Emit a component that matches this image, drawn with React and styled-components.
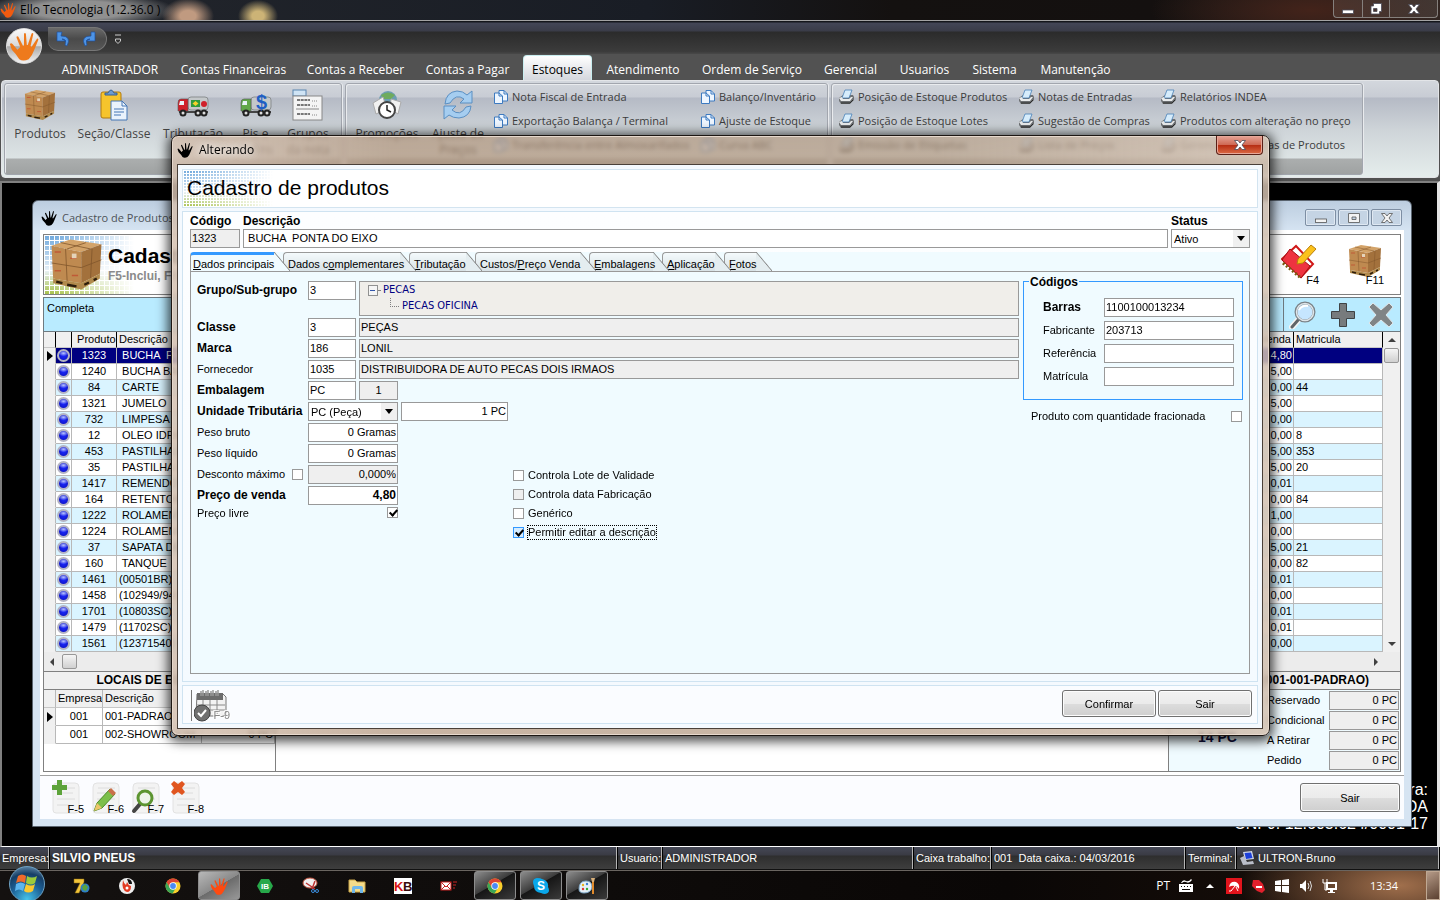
import React from 'react';
import styled, { createGlobalStyle, css } from 'styled-components';

const UI = '"Liberation Sans", Arial, sans-serif';
const SEGOE = '"Open Sans", "Noto Sans", sans-serif';

const GlobalStyle = createGlobalStyle`
  * {
    box-sizing: border-box;
  }
  body {
    margin: 0;
    background: #000;
    color: #000;
    font: 11px/16px ${UI};
  }
  button, input, select {
    font: inherit;
    color: inherit;
  }
`;

/* ---------- janela principal ---------- */

const Shell = styled.div`
  position: relative;
  display: flex;
  flex-direction: column;
  min-height: 100vh;
  overflow: hidden;
`;

const TitleBar = styled.header`
  display: flex;
  align-items: center;
  height: 21px;
  border-bottom: 1px solid #a3a3a3;
  background:
    radial-gradient(ellipse 95px 18px at 80px 10px, #909090 50%, transparent),
    radial-gradient(ellipse 26px 18px at 188px 16px, #c09a80 30%, transparent),
    radial-gradient(ellipse 20px 16px at 258px 16px, #ccb376 30%, transparent),
    radial-gradient(ellipse 160px 40px at 1310px 10px, #43231a, transparent),
    linear-gradient(90deg, #23262c, #191d25 45%, #141110 62%, #14100f 80%, #2e2623);
  font: 12px/20px ${SEGOE};

  span {
    flex: 1;
    padding-left: 4px;
  }
`;

const Caption = styled.div`
  display: flex;
  align-self: flex-start;
  height: 18px;
  margin-right: 2px;
  border: 1px solid #85807d;
  border-top: 0;
  border-radius: 0 0 4px 4px;
`;

const CaptionButton = styled.button`
  width: ${(p) => p.$w}px;
  padding: 0;
  border: 0;
  border-right: 1px solid #85807d;
  background: rgba(255, 255, 255, 0.08);
  line-height: 0;

  &:last-child {
    border-right: 0;
  }
`;

const QuickBar = styled.div`
  position: relative;
  height: 33px;
  padding-left: 48px;
  background: linear-gradient(#14161b 1px, #434656 2px, #3a3c48 10px, #2b2b2b 11px, #3c3c3c 31px, #464646 32px);
`;

const QuickPill = styled.div`
  display: flex;
  align-items: center;
  gap: 10px;
  width: 59px;
  height: 24px;
  padding-left: 8px;
  border: 1px solid #777;
  border-left: 0;
  border-radius: 0 12px 12px 10px;
  background: linear-gradient(#6a6a6a, #4a4a4a 50%, #575757);
`;

const QuickRow = styled.div`
  display: flex;
  align-items: center;
  gap: 8px;
  padding-top: 6px;
`;

const IconButton = styled.button`
  padding: 0;
  border: 0;
  background: none;
  line-height: 0;
`;

const Orb = styled.button`
  position: absolute;
  left: 6px;
  top: 7px;
  z-index: 2;
  width: 36px;
  height: 36px;
  padding: 0;
  border: 1px solid #ddd;
  border-radius: 50%;
  background: linear-gradient(#fafafa, #d9d9d9 50%, #a9a9a9 52%, #f4f4f4);
  line-height: 0;
`;

const MenuTabs = styled.nav`
  display: flex;
  align-items: flex-end;
  gap: 5px;
  height: 26px;
  padding-left: 52px;
  background: #525252;
`;

const MenuTab = styled.button`
  flex: 0 0 ${(p) => p.$w}px;
  height: 25px;
  padding: 0;
  border: 1px solid transparent;
  border-bottom: 0;
  border-radius: 4px 4px 0 0;
  background: none;
  color: #fff;
  font: 12px/28px ${SEGOE};
  white-space: nowrap;
  ${(p) => p.$active && css`
    background: linear-gradient(#fff, #d4d7dd);
    border-color: #c9eef0;
    color: #000;
  `}
`;

const Ribbon = styled.div`
  display: flex;
  gap: 3px;
  height: 98px;
  margin: 0 1px;
  padding: 2px;
  border: 1px solid #e3e5e8;
  border-radius: 4px;
  background: linear-gradient(#d3d7dd, #c8ccd4 16px, #b5bac5 17px, #cfd5d9 50px, #e5edec);
`;

const RibbonShade = styled.div`
  background: #505050;
  padding-bottom: 3px;
`;

const Group = styled.section`
  display: flex;
  flex: 0 0 ${(p) => p.$w}px;
  height: 92px;
  padding: 1px 0 0 ${(p) => p.$pad}px;
  border: 1px solid #a2a6ae;
  border-radius: 3px;
  box-shadow: inset 1px 1px #e9ebee, 1px 0 #e9ebee;
  background: linear-gradient(transparent 74px, #abaeae 75px, #9fa2a2);
`;

const BigButton = styled.button`
  display: flex;
  flex-direction: column;
  align-items: center;
  flex: 0 0 ${(p) => p.$w}px;
  gap: 5px;
  height: 80px;
  padding: 4px 0 0;
  border: 0;
  background: none;
  color: #444;
  font: 12px/16px ${SEGOE};
  overflow: visible;
`;

const SmallColumn = styled.div`
  flex: 0 0 ${(p) => p.$w}px;
`;

const SmallButton = styled.button`
  display: flex;
  align-items: center;
  gap: 3px;
  height: 24px;
  padding: 0;
  border: 0;
  background: none;
  color: #3c3c3c;
  font: 11px/24px ${SEGOE};
  white-space: nowrap;
`;

const Mdi = styled.main`
  position: relative;
  flex: 1;
  border: 2px solid #808080;
  border-width: 2px 3px 1px 2px;
  border-right-color: #e4e4e4;
  border-bottom-color: #fff;
  background: #000;
`;

const License = styled.address`
  position: absolute;
  right: 9px;
  bottom: 14px;
  color: #fff;
  font: 16px/17px ${UI};
  text-align: right;
`;

/* ---------- janela filha ---------- */

const Child = styled.section`
  position: absolute;
  left: 30px;
  right: 25px;
  top: 17px;
  padding: 0 7px 7px;
  border: 1px solid #5b6570;
  border-radius: 6px 6px 0 0;
  background: linear-gradient(#bccddf, #d6e4f2 30px);
`;

const ChildTitle = styled.header`
  display: flex;
  align-items: center;
  height: 29px;
  padding: 4px 2px 0 1px;
  color: #4d5358;
  font: 11px/24px ${SEGOE};

  span {
    flex: 1;
    padding-left: 5px;
  }
`;

const FrameButton = styled.button`
  width: 31px;
  height: 17px;
  margin-left: 2px;
  padding: 0;
  border: 1px solid #7d8ea3;
  border-radius: 2px;
  box-shadow: inset 0 0 0 1px #dfe8f2;
  background: #c5d4e4;
  line-height: 0;
`;

const ChildBody = styled.div`
  padding: 4px 3px 0;
  background: #fff;
`;

const dots = css`
  background-image:
    linear-gradient(90deg, transparent 10px, #fff 90px),
    repeating-linear-gradient(90deg, #fff 0 1px, transparent 1px ${(p) => p.$step}px),
    repeating-linear-gradient(#fff 0 1px, transparent 1px ${(p) => p.$step}px),
    linear-gradient(#6fa8dc, #e9f1f7 60%, #a9c24c);
`;

const Banner = styled.div`
  display: flex;
  align-items: center;
  height: 61px;
  padding: 0 18px 0 6px;
  border: 1px solid #808080;
  ${dots}

  h1 {
    margin: 0;
    font: bold 21px/22px ${UI};
  }
  p {
    margin: 0;
    color: #8a8a8a;
    font: bold 12px/18px ${UI};
  }
  div {
    flex: 1;
    padding-left: 5px;
  }
`;

const KeyButton = styled.button`
  position: relative;
  width: ${(p) => p.$w || 34}px;
  height: ${(p) => p.$h || 36}px;
  margin-left: ${(p) => p.$gap || 0}px;
  padding: 0;
  border: 0;
  background: none;
  line-height: 0;

  svg {
    display: block;
  }
  span {
    position: absolute;
    right: 0;
    bottom: 1px;
    font: 11px/12px ${UI};
  }
`;

const BannerKey = styled(KeyButton)`
  display: flex;
  align-items: flex-start;

  span {
    right: -2px;
    bottom: 0;
  }
`;

const SearchBar = styled.div`
  display: flex;
  height: 35px;
  margin-top: 2px;
  border: 1px solid #6f7a80;
  background: #b9ebff;

  > span {
    flex: 1;
    padding: 2px 3px;
  }
`;

const SearchTools = styled.div`
  display: flex;
  align-items: center;
  justify-content: space-between;
  width: 117px;
  padding: 0 6px 0 5px;
  border-left: 1px solid #6f7a80;
`;

const GridBox = styled.div`
  display: grid;
  grid-template-columns: 1fr 17px;
  border: 1px solid #808080;
  border-top: 0;
`;

const DataTable = styled.table`
  width: 100%;
  border-collapse: separate;
  border-spacing: 0;
  table-layout: fixed;
  background: #fff;

  th, td {
    height: 16px;
    padding: 0 2px;
    border-right: 1px solid #b8b8b8;
    border-bottom: 1px solid #b8b8b8;
    font-weight: normal;
    line-height: 15px;
    text-align: left;
    white-space: pre;
    overflow: hidden;
  }
  th {
    background: #f0f0f0;
    border-color: #000;
    border-bottom-color: #c8c8c8;
  }
  td:first-child {
    padding: 0;
    background: #f0f0f0;
    border-bottom-color: #f0f0f0;
    line-height: 0;
  }
  td:nth-child(2), td:nth-child(3) {
    padding: 0;
    text-align: center;
  }
`;

const Row = styled.tr`
  background: ${(p) => (p.$selected ? '#000080' : p.$odd ? '#daf4ff' : '#fff')};
  color: ${(p) => (p.$selected ? '#fff' : '#000')};
`;

const MoneyCell = styled.td`
  && {
    padding: 0 1px;
    text-align: right;
  }
`;

const MoneyHead = styled.th`
  && {
    text-align: right;
  }
`;

const Ball = styled.i`
  display: block;
  width: 13px;
  height: 13px;
  margin: 1px;
  border: 2px solid #b3b3c4;
  border-radius: 50%;
  background: radial-gradient(ellipse 5px 3px at 50% 25%, #b9c4ff, transparent), radial-gradient(#1b28ff, #0c10b8);
`;

const Pointer = styled.i`
  display: inline-block;
  margin-left: 3px;
  border: solid transparent;
  border-width: 5px 0 5px 6px;
  border-left-color: #000;
`;

const VScroll = styled.div`
  display: flex;
  flex-direction: column;
  align-items: center;
  padding: 6px 0;
  background: #f0f0f0;
`;

const HScroll = styled.div`
  display: flex;
  align-items: center;
  grid-column: 1 / 3;
  height: 19px;
  padding: 0 22px 0 6px;
  background: #ececec;
`;

const Thumb = styled.i`
  width: 15px;
  height: 15px;
  margin: ${(p) => (p.$v ? '6px 0 auto' : '0 auto 0 8px')};
  border: 1px solid #979797;
  border-radius: 2px;
  background: linear-gradient(#f5f5f5, #d0d0d0);
`;

const Arrow = styled.i`
  border: 4px solid transparent;
  ${(p) => p.$dir === 'up' && 'border-top: 0; border-bottom-color: #404040;'}
  ${(p) => p.$dir === 'down' && 'border-bottom: 0; border-top-color: #404040;'}
  ${(p) => p.$dir === 'left' && 'border-left: 0; border-right-color: #404040;'}
  ${(p) => p.$dir === 'right' && 'border-right: 0; border-left-color: #404040;'}
`;

const StockArea = styled.div`
  display: grid;
  grid-template-columns: 232px 1fr 231px;
  grid-template-rows: 18px 81px;
  border: 1px solid #808080;
  border-top: 0;
`;

const StockTitle = styled.h2`
  margin: 0;
  border-bottom: 1px solid #808080;
  background: #f0f0f0;
  font: bold 12px/17px ${UI};
  text-align: center;
  white-space: nowrap;
`;

const StockTable = styled(DataTable)`
  align-self: start;

  th, td {
    height: 18px;
    padding: 0 2px;
    line-height: 17px;
  }
  th {
    border-right-color: #b8b8b8;
  }
  td:nth-child(3) {
    padding: 0 2px;
    text-align: left;
  }
`;

const Cell = styled.div`
  border-right: ${(p) => (p.$edge ? '1px solid #808080' : '0')};
`;

const Balance = styled.div`
  display: grid;
  grid-template-columns: 91px 1fr 70px;
  align-items: center;
  padding: 0 1px 1px 7px;
  background: #f0fbff;

  strong {
    grid-row: 1 / 5;
    padding: 14px 8px 0 0;
    color: #10103c;
    font-size: 14px;
    text-align: center;
  }
`;

const ChildFooter = styled.footer`
  display: flex;
  align-items: center;
  height: 44px;
  margin: 3px -3px 0;
  padding: 0 4px 0 11px;
  border-top: 1px solid #a0a0a0;
  background: #fbfcff;

  > :last-child {
    margin-left: auto;
  }
`;

const PushButton = styled.button`
  width: ${(p) => p.$w}px;
  height: ${(p) => p.$h}px;
  border: 1px solid #707070;
  border-radius: 3px;
  box-shadow: inset 0 0 0 1px #fcfcfc;
  background: linear-gradient(#f2f2f2, #ebebeb 50%, #dddddd 51%, #cfcfcf);
`;

/* ---------- dialogo ---------- */

const Dialog = styled.form`
  position: absolute;
  z-index: 5;
  left: 171px;
  right: 170px;
  top: 135px;
  padding: 0 6px 6px 5px;
  border: 1px solid #1d1713;
  border-radius: 7px;
  box-shadow: inset 0 0 0 1px #e7d9cd, 0 2px 12px 3px rgba(0, 0, 0, 0.75);
  background: linear-gradient(90deg, rgba(212, 192, 176, 0.85), rgba(174, 144, 118, 0.68) 20%, rgba(176, 150, 126, 0.68) 70%, rgba(210, 192, 176, 0.85));
  backdrop-filter: blur(2px);
`;

const DialogTitle = styled.header`
  display: flex;
  align-items: flex-start;
  height: 28px;
  font: 12px/27px ${SEGOE};

  svg {
    margin-top: 6px;
  }
  span {
    flex: 1;
    padding-left: 6px;
    text-shadow: 0 0 8px #fff, 0 0 8px #fff;
  }
`;

const CloseButton = styled.button`
  width: 47px;
  height: 19px;
  padding: 0;
  border: 1px solid #5a2018;
  border-top: 0;
  border-radius: 0 0 4px 4px;
  box-shadow: inset 0 0 0 1px #e8a798;
  background: linear-gradient(#e5a496, #cf6a55 48%, #b52c12 50%, #dc6b45);
  line-height: 0;

  svg {
    margin: 0;
  }
`;

const DialogBody = styled.div`
  display: flex;
  flex-direction: column;
  gap: 3px;
  padding: 4px;
  border: 1px solid #4a4039;
  background: #f4f9fe;
`;

const DialogBanner = styled.div`
  height: 39px;
  border: 1px solid #d3e4f0;
  ${dots}

  h1 {
    margin: 0;
    padding-left: 4px;
    font: 21px/36px ${UI};
  }
`;

const Panel = styled.div`
  padding: 1px 7px 7px;
  border: 1px solid #cfe3f1;
  background: linear-gradient(#fdfeff, #f4faff);
`;

const HeadFields = styled.div`
  display: grid;
  grid-template-columns: 50px 1fr 79px;
  column-gap: 3px;
`;

const Label = styled.label`
  font: ${(p) => (p.$bold ? 'bold 12px' : '11px')}/${(p) => p.$lh || 19}px ${UI};
  white-space: nowrap;
`;

const Field = styled.input`
  width: ${(p) => (p.$w ? `${p.$w}px` : '100%')};
  min-width: 0;
  height: 19px;
  padding: 0 1px 1px;
  border: 1px solid #999;
  border-radius: 0;
  outline: 0;
  background: ${(p) => (p.readOnly ? '#efefef' : '#fff')};
  text-align: ${(p) => p.$align || 'left'};
  font: ${(p) => (p.$bold ? 'bold 12px' : '11px')}/16px ${UI};
`;

const LookupName = styled(Field)`
  flex: 1;
`;

const SelectWrap = styled.div`
  position: relative;
  width: ${(p) => (p.$w ? `${p.$w}px` : '100%')};

  &::after {
    content: '';
    position: absolute;
    right: 5px;
    top: 7px;
    border: 4px solid transparent;
    border-bottom: 0;
    border-top: 5px solid #000;
    pointer-events: none;
  }
`;

const Select = styled.select`
  display: block;
  width: 100%;
  height: 19px;
  padding: 0 2px;
  border: 1px solid #999;
  border-radius: 0;
  appearance: none;
  background: linear-gradient(90deg, transparent calc(100% - 16px), #f0f0f0 0) #fff;
`;

const TabList = styled.div`
  display: flex;
  height: 19px;
  margin-top: 4px;
  background: #f0fbff;
`;

const Tab = styled.button`
  position: relative;
  z-index: ${(p) => p.$z};
  flex: 0 0 ${(p) => p.$w}px;
  height: 19px;
  padding: 3px 0 0 ${(p) => (p.$active ? 3 : 5)}px;
  border: 0;
  background: none;
  font: 11px/18px ${UI};
  text-align: left;
  white-space: nowrap;

  &::before {
    content: '';
    position: absolute;
    z-index: -1;
    inset: 0 9px 0 0;
    border-top: ${(p) => (p.$active ? '3px solid #3399ff' : '1px solid #999')};
    border-left: 1px solid #999;
    border-radius: 4px 0 0 0;
    background: ${(p) => (p.$active ? '#f0fbff' : 'linear-gradient(#f4fafc, #d8e2e6)')};
  }
  &::after {
    content: '';
    position: absolute;
    z-index: -1;
    right: -7px;
    top: 0;
    width: 16px;
    height: 19px;
    background: linear-gradient(to top right, ${(p) => (p.$active ? '#f0fbff' : '#e4edf0')} 47%, #888 50%, transparent 54%);
  }
`;

const TabPage = styled.div`
  display: grid;
  grid-template-columns: 1fr 220px;
  column-gap: 4px;
  min-height: 403px;
  padding: 9px 6px;
  border: 1px solid #999;
  background: #f0fbff;
`;

const Stack = styled.div`
  display: flex;
  flex-direction: column;
  gap: 2px;
`;

const Line = styled.div`
  display: flex;
  align-items: flex-start;
  gap: 3px;

  > ${Label}:first-child {
    flex: 0 0 108px;
  }
`;

const Discount = styled.div`
  display: flex;
  align-items: center;
  justify-content: space-between;
  flex: 0 0 108px;
  padding-right: 2px;
`;

const Lower = styled.div`
  display: flex;
  gap: 5px;
  margin-top: 2px;
`;

const Tree = styled.ul`
  flex: 1;
  height: 35px;
  margin: 0;
  padding: 0 0 0 8px;
  border: 1px solid #999;
  background: #f0eeea;
  color: #000080;
  font: 11px/16px "DejaVu Sans Condensed", ${UI};
  list-style: none;

  li {
    display: flex;
    align-items: center;
    gap: 3px;
    height: 16px;
  }
`;

const Expander = styled.i`
  display: flex;
  align-items: center;
  width: 12px;

  &::before {
    content: '';
    width: 9px;
    height: 9px;
    border: 1px solid #919191;
    background: linear-gradient(#3355aa, #3355aa) center / 5px 1px no-repeat #f5f5f5;
  }
  &::after {
    content: '';
    width: 3px;
    border-top: 1px dotted #808080;
  }
`;

const Branch = styled.i`
  width: 9px;
  height: 9px;
  margin: -8px 0 0 22px;
  border: 1px dotted #808080;
  border-width: 0 0 1px 1px;
`;

const Check = styled.input`
  position: relative;
  flex: none;
  width: 11px;
  height: 11px;
  margin: 0;
  border: 1px solid ${(p) => (p.$focused ? '#3399ff' : '#999')};
  appearance: none;
  background: ${(p) => (p.$focused ? '#d5ecff' : p.disabled ? '#efefef' : '#fff')};

  &:checked::after {
    content: '';
    position: absolute;
    left: 3px;
    top: 0;
    width: 3px;
    height: 6px;
    border: solid #000;
    border-width: 0 2px 2px 0;
    transform: rotate(42deg);
  }
`;

const CheckList = styled.div`
  padding-top: 64px;
`;

const CheckLine = styled.label`
  display: flex;
  align-items: center;
  gap: 3px;
  height: 19px;

  span {
    border: 1px dotted ${(p) => (p.$focused ? '#000' : 'transparent')};
    line-height: 13px;
    white-space: nowrap;
  }
`;

const FreePrice = styled.div`
  display: flex;
  align-items: center;
  justify-content: space-between;
  width: 201px;
  height: 11px;
`;

const Codes = styled.fieldset`
  position: relative;
  display: grid;
  grid-template-columns: 61px 130px;
  align-content: start;
  row-gap: 4px;
  height: 119px;
  min-width: 0;
  margin: 0;
  padding: 16px 0 0 19px;
  border: 1px solid #3399ff;

  legend {
    position: absolute;
    left: 5px;
    top: -8px;
    padding: 0 1px;
    background: #f0fbff;
    font: bold 12px/16px ${UI};
  }
`;

const Fraction = styled.div`
  display: flex;
  align-items: center;
  justify-content: space-between;
  padding: 7px 1px 0 8px;
`;

const DialogFooter = styled(Panel)`
  display: flex;
  gap: 2px;
  height: 39px;
  padding: 4px 5px 0 8px;
  background: #fafcff;

  > :first-child {
    margin-right: auto;
    padding-left: 2px;
    border-left: 1px solid #777;
  }
`;

const FooterKey = styled(KeyButton)`
  text-align: left;

  span {
    right: 3px;
    bottom: 0;
    color: #888;
    text-shadow: 1px 1px #fff, -1px -1px #fff;
  }
`;

/* ---------- barras inferiores ---------- */

const StatusBar = styled.footer`
  display: flex;
  height: 23px;
  background: linear-gradient(#454856, #3a3b44 8px, #2e2e2e 9px, #3e3e3e);
  border-bottom: 1px solid #111;
  color: #fff;
`;

const Status = styled.div`
  display: flex;
  align-items: center;
  gap: 3px;
  flex: ${(p) => (p.$grow ? 1 : `0 0 ${p.$w}px`)};
  padding-left: 2px;
  border-right: 1px solid #000;
  box-shadow: inset -1px 0 #b5b5b5;
  font: ${(p) => (p.$bold ? 'bold 12px' : '11px')}/22px ${UI};
  white-space: pre;
`;

const Taskbar = styled.nav`
  display: flex;
  align-items: center;
  height: 30px;
  border-top: 1px solid #6a6560;
  background: radial-gradient(ellipse 160px 60px at calc(100% - 40px) 50%, #a06f4c, transparent), linear-gradient(90deg, #141110, #0a0706 70%, #1c100a);
  color: #fff;
  font: 12px/20px ${SEGOE};
`;

const Start = styled.button`
  display: grid;
  place-items: center;
  width: 36px;
  height: 36px;
  margin: -4px 13px 0 9px;
  padding: 0;
  border: 1px solid #6ea2c4;
  border-radius: 50%;
  background: radial-gradient(circle at 50% 95%, #46c4ea, #1c5f95 45%, #163e66 70%, #7fa8c4);
`;

const TaskButton = styled.button`
  display: grid;
  place-items: center;
  width: ${(p) => (p.$open ? 42 : 46)}px;
  height: 29px;
  margin: 0 ${(p) => (p.$open ? 2 : 0)}px;
  padding: 0;
  border: 1px solid ${(p) => (p.$open ? '#8d8d8d' : 'transparent')};
  border-radius: 3px;
  background: ${(p) => {
    if (p.$active) return 'linear-gradient(150deg, #b8b8b8, #8a8a8a 50%, #6b6b6b 51%, #989898)';
    return p.$open ? 'linear-gradient(150deg, #8d8d8d, #3d3d3d 45%, #161616 47%, #3a3a3a)' : 'none';
  }};
`;

const Tray = styled.div`
  display: flex;
  align-items: center;
  gap: 8px;
  margin-left: auto;
  height: 29px;

  time {
    width: 72px;
    padding-left: 24px;
    font-size: 11px;
  }
`;

const ShowDesktop = styled.button`
  width: 14px;
  height: 29px;
  padding: 0;
  border: 1px solid #bfa893;
  background: linear-gradient(150deg, #b59b88, #5b4030);
`;

/* ---------- icones ---------- */

const Hand = ({ color = '#f05a10', size = 16 }) => (
  <svg width={size} height={size} viewBox="0 0 32 32" fill={color}>
    <path d="M1 14 Q2 12 4 14 L9 20 L12 17 L8 7 Q8 5 10 6 L15 16 L16 15 L16 3 Q17 1 18 3 L19 15 L20 15 L24 3 Q25 1 26 3 L23 16 L24 17 L30 8 Q32 8 31 10 L27 20 Q25 26 21 30 Q15 33 11 30 Q8 25 3 20 Z" />
  </svg>
);

const Boxes = ({ size = 34 }) => (
  <svg width={size} height={size} viewBox="0 0 34 34">
    <path d="M1 5 L13 1 L33 4 L20 9 Z" fill="#d3a369" />
    <path d="M1 5 L20 9 L20 29 L2 26 Z" fill="#bf8a50" />
    <path d="M20 9 L33 4 L32 23 L20 29 Z" fill="#a3713c" />
    <path d="M1 16 L20 19 L33 14 M10 7 L11 28 M27 7 L26 26 M7 3 L26 7 M23 3 L11 7" fill="none" stroke="#80552a" strokeWidth="0.5" />
    <path d="M3 9 h4 M13 13 h4 M3 21 h4 M14 24 h4" stroke="#c05a36" strokeWidth="1" />
    <path d="M14 10 h3 v3 h-3z" fill="#e4d3ba" />
    <path d="M2 26 L20 29 L32 23 V26 L20 33 L2 29 Z" fill="#b18a4c" />
    <path d="M4 28 l4 1 M11 30 l6 1 M22 30 l3 -1.500 M28 27 l2 -1" stroke="#2c1d0c" strokeWidth="1.500" />
  </svg>
);

const Clipboard = () => (
  <svg width="32" height="32" viewBox="0 0 32 32">
    <rect x="3" y="3" width="20" height="26" rx="2" fill="#f6c42c" stroke="#b07a10" />
    <path d="M7 6 V4 H10 Q13 -2 16 4 H19 V6 Z" fill="#6d9bd1" stroke="#355f94" />
    <path d="M13 12 H24 L29 17 V31 H13 Z" fill="#eaf3fc" stroke="#4477b5" />
    <path d="M24 12 V17 H29 M16 20 H26 M16 23 H26 M16 26 H23" fill="none" stroke="#4477b5" />
  </svg>
);

const Truck = ({ cab, children }) => (
  <svg width="32" height="32" viewBox="0 0 32 32">
    <rect x="11" y="8" width="20" height="13" rx="3" fill="#c4c8ca" stroke="#8a8e90" />
    <path d="M1 14 Q1 10 4 10 H11 V22 H1 Z" fill={cab} stroke="#555" strokeWidth="0.6" />
    <path d="M3 12 H7 V16 H2 Z" fill="#e8f2f8" />
    <path d="M2 22 H31 V24 H2 Z" fill="#444" />
    {[6, 21, 27].map((x) => (
      <circle key={x} cx={x} cy="24" r="2.500" fill="#ddd" stroke="#222" strokeWidth="2" />
    ))}
    {children}
  </svg>
);

const NoteGroup = () => (
  <svg width="32" height="32" viewBox="0 0 32 32">
    <rect x="1" y="1" width="13" height="6" fill="#cfe4f5" stroke="#5a85b0" />
    <rect x="1" y="7" width="29" height="24" fill="#f4f4f4" stroke="#888" />
    <path d="M5 11 H18 M5 16 H18 M5 25 H18" stroke="#777" strokeWidth="2" strokeDasharray="3 0.7" />
    <path d="M4 20 H27" stroke="#888" />
    <path d="M20 12 h6 M20 17 h6 M20 26 h6" stroke="#888" strokeDasharray="1 1" />
  </svg>
);

const Promo = () => (
  <svg width="32" height="32" viewBox="0 0 32 32">
    <circle cx="17" cy="11" r="9" fill="#6d9db3" />
    <path d="M10 6 Q17 1 24 6 L20 10 H12 Z" fill="#6fab5e" />
    <path d="M2 14 L12 8 L16 20 L5 25 Z M20 10 L30 13 L27 25 L19 20 Z" fill="#f1f1f1" stroke="#aaa" />
    <circle cx="16" cy="21" r="8" fill="#fff" stroke="#444" strokeWidth="2" />
    <path d="M16 16 V21 L20 23" fill="none" stroke="#222" strokeWidth="1.500" />
  </svg>
);

const Refresh = () => (
  <svg width="32" height="32" viewBox="0 0 32 32">
    <path d="M3 15 Q4 3 15 2 Q21 2 25 6 L30 2 V14 H18 L22 10 Q14 4 8 14 Z" fill="#a5cdf0" stroke="#5b8fc2" />
    <path d="M29 17 Q28 28 17 29 Q11 29 7 26 L2 30 V17 H14 L10 21 Q18 28 24 18 Z" fill="#a5cdf0" stroke="#5b8fc2" />
  </svg>
);

const Pages = () => (
  <svg width="16" height="16" viewBox="0 0 16 16" fill="#eef6ff" stroke="#3d7ac0">
    <path d="M6 1.500 H11 L14.500 5 V12 H6 Z" />
    <path d="M1.500 4 H6 L9.500 7 V14.500 H1.500 Z" />
    <path d="M6 4 V7 H9.500 M11 1.500 V5 H14.500" fill="none" />
  </svg>
);

const Printer = () => (
  <svg width="17" height="16" viewBox="0 0 17 16">
    <path d="M1 9 L5 6 L15 6 L16 8 V11 L12 15 H3 L1 12 Z" fill="#6d7073" />
    <path d="M7 1 H14 L11 9 H4 Z" fill="#d6ecfb" stroke="#4a82b8" strokeWidth="0.8" />
    <path d="M1 9 L4 8 L5 10 H11 L13 8 L15 8 L12 12 H3 Z" fill="#e9ebec" />
    <path d="M3 14 L12 14 L15 11" fill="none" stroke="#2b2b2b" />
  </svg>
);

const Undo = ({ flip }) => (
  <svg width="15" height="16" viewBox="0 0 15 16">
    <path
      d={flip ? 'M4 15 Q-1 5 10 5 V1 L14 1 V10 L5 10 L9 8 Q4 8 6 14 Z' : 'M11 15 Q16 5 5 5 L6 1 H1 V10 H10 L6 8 Q11 8 9 14 Z'}
      fill="#4d94e6"
      stroke="#1c4f9b"
      strokeWidth="0.7"
    />
  </svg>
);

const Glyph = ({ kind, color = '#fff', edge = '#4b4b58' }) => (
  <svg width="14" height="12" viewBox="0 0 14 12" fill={color} stroke={edge} strokeWidth="0.8">
    {kind === 'min' && <rect x="1.500" y="7" width="11" height="3.500" />}
    {kind === 'restore' && <path fillRule="evenodd" d="M4.500 0.500 H12.500 V8.500 H10.500 V11 H2 V3 H4.500 Z M4.500 5.500 V8.500 H8 V5.500 Z" />}
    {kind === 'max' && <path fillRule="evenodd" d="M1.500 1.500 H12.500 V10.500 H1.500 Z M5 5 V7.500 H9 V5 Z" />}
    {kind === 'close' && <path d="M1.500 1.500 H5 L7 4 L9 1.500 H12.500 L9 6 L12.500 10.500 H9 L7 8 L5 10.500 H1.500 L5 6 Z" />}
  </svg>
);

const Agenda = () => (
  <svg width="36" height="36" viewBox="0 0 36 36">
    <path d="M1 15 L15 2 L32 20 L20 33 Z" fill="#fff" stroke="#d01818" strokeWidth="2" />
    <path d="M1 16 L9 5 L29 22 L20 34 Z" fill="#ee3340" stroke="#a30f14" />
    <path d="M2 19 L20 34" stroke="#7d5a10" strokeWidth="3" strokeDasharray="2 2" />
    <path d="M17 15 L30 1 L35 5 L22 19 L16 20 Z" fill="#fbc21c" stroke="#b97f0a" />
  </svg>
);

const Lens = () => (
  <svg width="28" height="28" viewBox="0 0 28 28">
    <path d="M3 26 L10 18" stroke="#f4f4f4" strokeWidth="6" strokeLinecap="round" />
    <path d="M3 26 L10 18" stroke="#5f6468" strokeWidth="3" strokeLinecap="round" />
    <circle cx="16" cy="11" r="9" fill="#c6e6ff" stroke="#7a8288" strokeWidth="3" />
    <circle cx="16" cy="11" r="8.500" fill="none" stroke="#dfe6ea" strokeWidth="1.500" />
    <path d="M10 9 Q13 4 19 5" fill="none" stroke="#fff" strokeWidth="2" />
  </svg>
);

const Plus = () => (
  <svg width="26" height="26" viewBox="0 0 26 26">
    <path d="M9.500 1.500 H16.500 V9.500 H24.500 V16.500 H16.500 V24.500 H9.500 V16.500 H1.500 V9.500 H9.500 Z" fill="#777b7d" stroke="#3f4244" />
  </svg>
);

const Cross = () => (
  <svg width="26" height="26" viewBox="0 0 26 26">
    <path d="M5 1 L13 8 L21 1 L25 5 L18 13 L25 21 L21 25 L13 18 L5 25 L1 21 L8 13 L1 5 Z" fill="#808486" stroke="#dfe6ea" />
  </svg>
);

const Sheet = ({ children }) => (
  <svg width="34" height="36" viewBox="0 0 34 36">
    <path d="M6 3 H24 Q28 3 28 7 V30 Q28 33 24 33 H5 Q2 33 2 30 V7 Q2 3 6 3Z" fill="#f3f3f3" stroke="#e2e2e2" />
    <path d="M7 8 H24 M6 13 H22 M6 19 H24 M6 25 H18" stroke="#dcdcdc" />
    {children}
  </svg>
);

const Calendar = () => (
  <svg width="38" height="32" viewBox="0 0 38 32">
    <path d="M3 4 L29 4 L32 7 L32 26 L2 26 Z" fill="#f2f2f2" stroke="#777" />
    <path d="M3 3 H29 V10 H3 Z" fill="#6c6c6c" />
    <path d="M7 6 V1 M12 6 V1 M17 6 V1 M22 6 V1 M9 6 V0 M14 6 V0 M19 6 V0 M24 6 V0" stroke="#999" strokeWidth="1.500" />
    <path d="M2 15 H31 M2 20 H31 M9 10 V26 M16 10 V26 M23 10 V26" stroke="#888" />
    <circle cx="8" cy="23" r="8" fill="#707070" stroke="#444" />
    <path d="M4 23 L7 26 L12 20" fill="none" stroke="#fff" strokeWidth="2" />
  </svg>
);

const Chrome = () => (
  <svg width="16" height="16" viewBox="0 0 16 16">
    <circle cx="8" cy="8" r="7.500" fill="#f9cf2c" />
    <path d="M1.500 4.300 A7.500 7.500 0 0 1 14.500 4.300 L8 4.300 L4.800 10 Z" fill="#dd4433" />
    <path d="M1.500 4.300 A7.500 7.500 0 0 0 7.500 15.500 L11.200 9.600 L5 10 Z" fill="#3aa757" />
    <circle cx="8" cy="8" r="3.700" fill="#fff" />
    <circle cx="8" cy="8" r="2.900" fill="#4a8af4" />
  </svg>
);

const WinLogo = () => (
  <svg width="26" height="26" viewBox="0 0 26 26">
    <path d="M4 5 Q8 2 12 5 L11 12 Q7 9 2 12 Z" fill="#f06a2a" />
    <path d="M13 5 Q18 8 23 5 L21 12 Q17 15 12 12 Z" fill="#9ccb3b" />
    <path d="M2 13 Q7 10 11 13 L9 20 Q5 17 1 20 Z" fill="#5db5ee" />
    <path d="M12 13 Q17 16 21 13 L19 20 Q14 23 10 20 Z" fill="#fcc92e" />
  </svg>
);

const TaskIcon = ({ kind }) => (
  <svg width="18" height="18" viewBox="0 0 18 18">
    {kind === 'seven' && (
      <>
        <path d="M2 2 H12 V5 L7 16 H3 L8 6 H2 Z" fill="#f3c53a" stroke="#8a6a10" strokeWidth="0.5" />
        <circle cx="13" cy="11" r="4.500" fill="#2f7fc4" />
        <path d="M10 10 l3 -3 3 3 -2 4 -3 -1z" fill="#5aa33c" />
      </>
    )}
    {kind === 'flame' && (
      <>
        <circle cx="9" cy="9" r="8" fill="#eee" />
        <path d="M5 3 Q6 7 8 8 L9 5 Q10 8 13 9 Q13 15 9 15 Q3 13 5 3Z" fill="#e23a22" />
        <path d="M9 2 Q14 2 14 7 L11 7 Z" fill="#111" />
        <circle cx="9" cy="11" r="1.500" fill="#fff" />
      </>
    )}
    {kind === 'ib' && (
      <>
        <path d="M5 2 H13 L17 9 L13 16 H5 L1 9 Z" fill="#27a84a" />
        <text x="9" y="12" fontSize="8" fontWeight="bold" fill="#fff" textAnchor="middle" fontFamily="Liberation Sans">IB</text>
      </>
    )}
    {kind === 'snip' && (
      <>
        <ellipse cx="8" cy="6" rx="7" ry="5" fill="#f1efef" stroke="#c2503c" />
        <path d="M4 6 L13 12 M13 4 L10 12" stroke="#b33" strokeWidth="1.500" />
        <circle cx="11" cy="14" r="1.500" fill="none" stroke="#3b8fe0" />
        <circle cx="15" cy="14" r="1.500" fill="none" stroke="#3b8fe0" />
      </>
    )}
    {kind === 'folder' && (
      <>
        <path d="M1 3 H7 L9 5 H17 V15 H1 Z" fill="#f4dc8a" stroke="#c9a548" />
        <path d="M4 16 V11 Q4 9 6 9 H13 Q15 9 15 11 V16 H12 V12 H7 V16 Z" fill="#6fb7ea" />
      </>
    )}
    {kind === 'kb' && (
      <>
        <rect x="0" y="1" width="18" height="16" fill="#fff" />
        <text x="0" y="14" fontSize="13" fontWeight="bold" fill="#d81414" fontFamily="Liberation Sans Narrow, Liberation Sans">K</text>
        <text x="9" y="14" fontSize="13" fontWeight="bold" fill="#3a0a0a" fontFamily="Liberation Sans Narrow, Liberation Sans">B</text>
      </>
    )}
    {kind === 'mail' && (
      <>
        <rect x="1" y="5" width="10" height="8" fill="#fff" stroke="#c22" />
        <path d="M1 5 L6 10 L11 5 M1 13 L5 9 M11 13 L7 9 M13 5 h4 M13 8 h3 M13 11 h2" fill="none" stroke="#c22" />
      </>
    )}
    {kind === 'skype' && (
      <>
        <path d="M5 1 Q9 1 10 2 Q17 4 16 10 Q19 16 13 17 Q11 17 9 16 Q2 15 2 9 Q-1 2 5 1Z" fill="#0aa7ea" />
        <text x="9" y="13" fontSize="12" fontWeight="bold" fill="#fff" textAnchor="middle" fontFamily="Liberation Sans">S</text>
      </>
    )}
    {kind === 'paint' && (
      <>
        <path d="M1 12 Q1 4 8 4 Q14 4 14 10 Q13 16 6 16 Q1 16 1 12Z" fill="#e4f0f8" stroke="#7fa8c8" />
        <circle cx="5" cy="8" r="1.200" fill="#e8b21c" />
        <circle cx="9" cy="7" r="1.200" fill="#3c7fd0" />
        <circle cx="5" cy="12" r="1.200" fill="#d33" />
        <circle cx="9" cy="12" r="1.200" fill="#3a3" />
        <path d="M13 1 h4 l-1 4 h-2z" fill="#d8b07a" />
        <path d="M14 5 h2 v12 h-2z" fill="#e08a2c" />
      </>
    )}
  </svg>
);

const TrayIcon = ({ kind }) => (
  <svg width="16" height="16" viewBox="0 0 16 16" fill="#fff">
    {kind === 'keyboard' && <path fillRule="evenodd" d="M1 6 H15 V14 H1Z M3 8v1h1v-1z M6 8v1h1v-1z M9 8v1h1v-1z M12 8v1h1v-1z M4 11v1h8v-1z M3 5 Q5 1 8 3 Q11 4 13 1 L14 2 Q11 6 8 4 Q6 3 4 5z" />}
    {kind === 'up' && <path d="M4 10 L8 6 L12 10Z" />}
    {kind === 'avira' && (
      <>
        <rect width="16" height="16" fill="#e2141c" />
        <path d="M3 9 Q4 3 10 4 Q14 6 13 11 Q11 8 9 8 Q6 7 3 9Z" />
        <path d="M9 8 L5 13 H3 M10 9 L12 13" fill="none" stroke="#fff" />
      </>
    )}
    {kind === 'record' && (
      <>
        <path d="M3 2 H9 L13 6 L15 12 L12 15 L7 13 L2 8 Z" fill="#e3202c" />
        <rect x="6" y="8" width="6" height="2" />
      </>
    )}
    {kind === 'windows' && <path d="M1 3 L7 2 V7 H1Z M8 2 L15 1 V7 H8Z M1 8 H7 V14 L1 13Z M8 8 H15 V15 L8 14Z" />}
    {kind === 'sound' && (
      <>
        <path d="M2 6 H4 L8 2 V14 L4 10 H2Z" />
        <path d="M10 5 Q12 8 10 11 M12 3 Q15 8 12 13" fill="none" stroke="#ddd" />
      </>
    )}
    {kind === 'network' && (
      <>
        <path fillRule="evenodd" d="M4 4 H15 V12 H4Z M6 6 V10 H13 V6Z M8 12 H11 V14 H13 V15 H6 V14 H8Z" />
        <path d="M1 1 v4 h4 v-4 M3 5 v7 h2" fill="none" stroke="#fff" />
      </>
    )}
    {kind === 'pc' && (
      <>
        <path d="M4 2 L13 1 L15 9 L6 10Z" fill="#cfd6e6" />
        <path d="M5.500 3 L12 2.500 L13.500 8 L7 9Z" fill="#1c3fd8" />
        <path d="M1 8 L5 6 L8 12 L14 11 L15 14 L4 15 Z" fill="#b9bec9" />
      </>
    )}
  </svg>
);

/* ---------- dados ---------- */

const MENU = [
  ['ADMINISTRADOR', 116], ['Contas Financeiras', 121], ['Contas a Receber', 113], ['Contas a Pagar', 101],
  ['Estoques', 69], ['Atendimento', 92], ['Ordem de Serviço', 116], ['Gerencial', 71],
  ['Usuarios', 67], ['Sistema', 63], ['Manutenção', 89],
];

const PRODUCTS = [
  ['1323', ' BUCHA  PONTA DO EIXO', '4,80', ''],
  ['1240', ' BUCHA BALANCA', '5,00', ''],
  ['84', ' CARTE', '0,00', '44'],
  ['1321', ' JUMELO', '5,00', ''],
  ['732', ' LIMPESA', '0,00', ''],
  ['12', ' OLEO IDRAULICO', '0,00', '8'],
  ['453', ' PASTILHA DE FREIO', '5,00', '353'],
  ['35', ' PASTILHA DE FREIO', '5,00', '20'],
  ['1417', ' REMENDO', '0,01', ''],
  ['164', ' RETENTOR', '0,00', '84'],
  ['1222', ' ROLAMENTO', '1,00', ''],
  ['1224', ' ROLAMENTO', '0,00', ''],
  ['37', ' SAPATA DE FREIO', '5,00', '21'],
  ['160', ' TANQUE', '0,00', '82'],
  ['1461', '(00501BR)', '0,01', ''],
  ['1458', '(102949/94)', '0,00', ''],
  ['1701', '(10803SC)', '0,01', ''],
  ['1479', '(11702SC)', '0,01', ''],
  ['1561', '(12371540)', '0,00', ''],
];

const LOOKUPS = [
  ['classe', 'Classe', '3', 'PEÇAS', true],
  ['marca', 'Marca', '186', 'LONIL', true],
  ['fornecedor', 'Fornecedor', '1035', 'DISTRIBUIDORA DE AUTO PECAS DOIS IRMAOS', false],
];

const CODES = [
  ['barras', 'Barras', '1100100013234'],
  ['fabricante', 'Fabricante', '203713'],
  ['referencia', 'Referência', ''],
  ['matricula', 'Matrícula', ''],
];

const BALANCES = ['Reservado', 'Condicional', 'A Retirar', 'Pedido'];

const Small = ({ icon: Icon, items, w }) => (
  <SmallColumn $w={w}>
    {items.map((t) => (
      <SmallButton key={t}><Icon />{t}</SmallButton>
    ))}
  </SmallColumn>
);

function MainRibbon() {
  return (
    <RibbonShade>
      <Ribbon>
        <Group $w={338} $pad={0}>
          <BigButton $w={70}><Boxes size={32} />Produtos</BigButton>
          <BigButton $w={78}><Clipboard />Seção/Classe</BigButton>
          <BigButton $w={80}>
            <Truck cab="#d0202a">
              <rect x="14" y="11" width="9" height="7" fill="#2f9a3f" />
              <path d="M18.500 12 l3 2.500 -3 2.500 -3 -2.500z" fill="#f5d22c" />
              <circle cx="27" cy="15" r="3" fill="#d0202a" />
            </Truck>
            Tributação
          </BigButton>
          <BigButton $w={45}>
            <Truck cab="#62a84a">
              <text x="16" y="20" fontSize="20" fontWeight="bold" fill="#1f5fc4" fontFamily="Liberation Sans">$</text>
            </Truck>
            Pis e<br />Cofins
          </BigButton>
          <BigButton $w={60}><NoteGroup />Grupos<br />da nota</BigButton>
        </Group>
        <Group $w={483} $pad={5}>
          <BigButton $w={72}><Promo />Promoções</BigButton>
          <BigButton $w={70}><Refresh />Ajuste de<br />Preços</BigButton>
          <Small icon={Pages} w={207} items={['Nota Fiscal de Entrada', 'Exportação Balança / Terminal', 'Transferência entre Almoxarifados']} />
          <Small icon={Pages} w={120} items={['Balanço/Inventário', 'Ajuste de Estoque', 'Curva ABC']} />
        </Group>
        <Group $w={532} $pad={6}>
          <Small icon={Printer} w={180} items={['Posição de Estoque Produtos', 'Posição de Estoque Lotes', 'Emissão de Etiquetas']} />
          <Small icon={Printer} w={142} items={['Notas de Entradas', 'Sugestão de Compras', 'Lista de Preços']} />
          <Small icon={Printer} w={200} items={['Relatórios INDEA', 'Produtos com alteração no preço', 'Gerenciar Compras de Produtos']} />
        </Group>
      </Ribbon>
    </RibbonShade>
  );
}

function ProductWindow() {
  return (
    <Child>
      <ChildTitle>
        <Hand color="#000" /><span>Cadastro de Produtos</span>
        {['min', 'max', 'close'].map((k) => (
          <FrameButton key={k} type="button" aria-label={k}><Glyph kind={k} color="#f3f3f3" edge="#555" /></FrameButton>
        ))}
      </ChildTitle>
      <ChildBody>
        <Banner $step={5}>
          <Boxes size={53} />
          <div>
            <h1>Cadastro de Produtos</h1>
            <p>F5-Inclui, F6-Altera, F7-Consulta, F8-Exclui</p>
          </div>
          <BannerKey $w={36} $h={42}><Agenda /><span>F4</span></BannerKey>
          <BannerKey $w={34} $h={42} $gap={31}><Boxes /><span>F11</span></BannerKey>
        </Banner>
        <SearchBar>
          <span>Completa</span>
          <SearchTools>
            <IconButton aria-label="Buscar"><Lens /></IconButton>
            <IconButton aria-label="Adicionar"><Plus /></IconButton>
            <IconButton aria-label="Limpar"><Cross /></IconButton>
          </SearchTools>
        </SearchBar>
        <GridBox>
          <DataTable>
            <colgroup>
              <col width="12" /><col width="16" /><col width="45" /><col /><col width="80" /><col width="89" />
            </colgroup>
            <thead>
              <tr><th /><th /><th>{' Produto'}</th><th>Descrição</th><MoneyHead>Preço Venda</MoneyHead><th>Matricula</th></tr>
            </thead>
            <tbody>
              {PRODUCTS.map(([code, name, price, mat], i) => (
                <Row key={code} $selected={i === 0} $odd={i % 2 === 0}>
                  <td>{i === 0 && <Pointer />}</td>
                  <td><Ball /></td>
                  <td>{code}</td>
                  <td>{name}</td>
                  <MoneyCell>{price}</MoneyCell>
                  <td>{mat}</td>
                </Row>
              ))}
            </tbody>
          </DataTable>
          <VScroll><Arrow $dir="up" /><Thumb $v /><Arrow $dir="down" /></VScroll>
          <HScroll><Arrow $dir="left" /><Thumb /><Arrow $dir="right" /></HScroll>
        </GridBox>
        <StockArea>
          <StockTitle>LOCAIS DE ESTOQUE</StockTitle>
          <StockTitle />
          <StockTitle>ESTOQUE (001-001-PADRAO)</StockTitle>
          <Cell $edge>
            <StockTable>
              <colgroup><col width="12" /><col width="47" /><col width="99" /><col /></colgroup>
              <thead>
                <tr><th /><th>Empresa</th><th>Descrição</th><th>Estoque</th></tr>
              </thead>
              <tbody>
                <tr><td><Pointer /></td><td>001</td><td>001-PADRAO</td><MoneyCell>14 PC</MoneyCell></tr>
                <tr><td /><td>001</td><td>002-SHOWROOM</td><MoneyCell>0 PC</MoneyCell></tr>
              </tbody>
            </StockTable>
          </Cell>
          <Cell $edge />
          <Balance>
            <strong>14 PC</strong>
            {BALANCES.map((b) => (
              <React.Fragment key={b}>
                <Label htmlFor={b}>{b}</Label>
                <Field id={b} readOnly $align="right" value="0 PC" />
              </React.Fragment>
            ))}
          </Balance>
        </StockArea>
        <ChildFooter>
          <KeyButton $w={33}>
            <Sheet><path d="M6 0 h5 v5 h5 v5 h-5 v5 h-5 v-5 h-5 v-5 h5z" fill="#5da33a" /></Sheet><span>F-5</span>
          </KeyButton>
          <KeyButton $w={33} $gap={7}>
            <Sheet>
              <path d="M3 31 L6 23 L19 9 L24 14 L11 28 Z" fill="#7cbf4a" stroke="#4c8a28" />
              <path d="M17 11 L20 8 L25 13 L22 16Z" fill="#c9704a" />
              <path d="M3 31 L6 23 L11 28Z" fill="#ecc66a" />
            </Sheet>
            <span>F-6</span>
          </KeyButton>
          <KeyButton $w={33} $gap={7}>
            <Sheet>
              <path d="M3 31 L9 24" stroke="#444" strokeWidth="4" strokeLinecap="round" />
              <circle cx="14" cy="18" r="7" fill="#eef4ea" stroke="#5c9430" strokeWidth="3" />
            </Sheet>
            <span>F-7</span>
          </KeyButton>
          <KeyButton $w={33} $gap={7}>
            <Sheet><path d="M3 1 l4 3 4 -3 3 3 -3 4 3 4 -3 3 -4 -3 -4 3 -3 -3 3 -4 -3 -4z" fill="#e0551f" /></Sheet><span>F-8</span>
          </KeyButton>
          <PushButton $w={100} $h={29}>Sair</PushButton>
        </ChildFooter>
      </ChildBody>
    </Child>
  );
}

function EditDialog() {
  return (
    <Dialog onSubmit={(e) => e.preventDefault()}>
      <DialogTitle>
        <Hand color="#000" /><span>Alterando</span>
        <CloseButton type="button" aria-label="Fechar"><Glyph kind="close" /></CloseButton>
      </DialogTitle>
      <DialogBody>
        <DialogBanner $step={3}><h1>Cadastro de produtos</h1></DialogBanner>
        <Panel>
          <HeadFields>
            <Label $bold $lh={16} htmlFor="codigo">Código</Label>
            <Label $bold $lh={16} htmlFor="descricao">Descrição</Label>
            <Label $bold $lh={16} htmlFor="status">Status</Label>
            <Field id="codigo" readOnly value="1323" />
            <Field id="descricao" defaultValue=" BUCHA  PONTA DO EIXO" />
            <SelectWrap><Select id="status"><option>Ativo</option></Select></SelectWrap>
          </HeadFields>
          <TabList role="tablist">
            <Tab type="button" $w={93} $z={7} $active><u>D</u>ados principais</Tab>
            <Tab type="button" $w={126} $z={6}>Dados c<u>o</u>mplementares</Tab>
            <Tab type="button" $w={66} $z={5}><u>T</u>ributação</Tab>
            <Tab type="button" $w={114} $z={4}>Custos/<u>P</u>reço Venda</Tab>
            <Tab type="button" $w={73} $z={3}><u>E</u>mbalagens</Tab>
            <Tab type="button" $w={62} $z={2}><u>A</u>plicação</Tab>
            <Tab type="button" $w={41} $z={1}><u>F</u>otos</Tab>
          </TabList>
          <TabPage>
            <div>
              <Stack>
                <Line>
                  <Label $bold htmlFor="grupo">Grupo/Sub-grupo</Label>
                  <Field id="grupo" $w={48} defaultValue="3" />
                  <Tree>
                    <li><Expander />PECAS</li>
                    <li><Branch />PECAS OFICINA</li>
                  </Tree>
                </Line>
                {LOOKUPS.map(([id, label, code, name, bold]) => (
                  <Line key={id}>
                    <Label $bold={bold} htmlFor={id}>{label}</Label>
                    <Field id={id} $w={48} defaultValue={code} />
                    <LookupName readOnly aria-label={`${label} nome`} value={name} />
                  </Line>
                ))}
                <Line>
                  <Label $bold htmlFor="embalagem">Embalagem</Label>
                  <Field id="embalagem" $w={48} defaultValue="PC" />
                  <Field readOnly $w={39} $align="center" aria-label="Quantidade" value="1" />
                </Line>
              </Stack>
              <Lower>
                <Stack>
                  <Line>
                    <Label $bold htmlFor="unidade">Unidade Tributária</Label>
                    <SelectWrap $w={90}><Select id="unidade"><option>PC (Peça)</option></Select></SelectWrap>
                    <Field $w={107} $align="right" aria-label="Fator" defaultValue="1 PC" />
                  </Line>
                  <Line>
                    <Label htmlFor="bruto">Peso bruto</Label>
                    <Field id="bruto" $w={90} $align="right" defaultValue="0 Gramas" />
                  </Line>
                  <Line>
                    <Label htmlFor="liquido">Peso líquido</Label>
                    <Field id="liquido" $w={90} $align="right" defaultValue="0 Gramas" />
                  </Line>
                  <Line>
                    <Discount>
                      <Label htmlFor="desconto">Desconto máximo</Label>
                      <Check id="desconto" type="checkbox" />
                    </Discount>
                    <Field readOnly $w={90} $align="right" aria-label="Percentual" value="0,000%" />
                  </Line>
                  <Line>
                    <Label $bold htmlFor="preco">Preço de venda</Label>
                    <Field id="preco" $w={90} $align="right" $bold defaultValue="4,80" />
                  </Line>
                  <FreePrice>
                    <Label $lh={12} htmlFor="livre">Preço livre</Label>
                    <Check id="livre" type="checkbox" defaultChecked />
                  </FreePrice>
                </Stack>
                <CheckList>
                  <CheckLine><Check type="checkbox" /><span>Controla Lote de Validade</span></CheckLine>
                  <CheckLine><Check type="checkbox" disabled /><span>Controla data Fabricação</span></CheckLine>
                  <CheckLine><Check type="checkbox" /><span>Genérico</span></CheckLine>
                  <CheckLine $focused><Check type="checkbox" $focused defaultChecked /><span>Permitir editar a descrição</span></CheckLine>
                </CheckList>
              </Lower>
            </div>
            <div>
              <Codes>
                <legend>Códigos</legend>
                {CODES.map(([id, label, value], i) => (
                  <React.Fragment key={id}>
                    <Label $bold={i === 0} htmlFor={id}>{label}</Label>
                    <Field id={id} defaultValue={value} />
                  </React.Fragment>
                ))}
              </Codes>
              <Fraction>
                <Label htmlFor="fracao">Produto com quantidade fracionada</Label>
                <Check id="fracao" type="checkbox" />
              </Fraction>
            </div>
          </TabPage>
        </Panel>
        <DialogFooter>
          <FooterKey type="button" aria-label="F-9" $w={42} $h={31}><Calendar /><span>F-9</span></FooterKey>
          <PushButton type="submit" $w={94} $h={27}>Confirmar</PushButton>
          <PushButton type="button" $w={94} $h={27}>Sair</PushButton>
        </DialogFooter>
      </DialogBody>
    </Dialog>
  );
}

export default function App() {
  return (
    <>
      <GlobalStyle />
      <Shell>
        <TitleBar>
          <Hand /><span>Ello Tecnologia (1.2.36.0 )</span>
          <Caption>
            <CaptionButton $w={29} aria-label="Minimizar"><Glyph kind="min" /></CaptionButton>
            <CaptionButton $w={27} aria-label="Restaurar"><Glyph kind="restore" /></CaptionButton>
            <CaptionButton $w={47} aria-label="Fechar"><Glyph kind="close" /></CaptionButton>
          </Caption>
        </TitleBar>
        <QuickBar>
          <Orb aria-label="Menu"><Hand size={30} color="#ee7a1c" /></Orb>
          <QuickRow>
            <QuickPill>
              <IconButton aria-label="Desfazer"><Undo /></IconButton>
              <IconButton aria-label="Refazer"><Undo flip /></IconButton>
            </QuickPill>
            <svg width="6" height="10" viewBox="0 0 6 10" fill="none" stroke="#ccc">
              <path d="M0 1 H6 M0.500 5 H5.500 V7 L3 9.500 L0.500 7 Z" />
            </svg>
          </QuickRow>
        </QuickBar>
        <MenuTabs>
          {MENU.map(([t, w]) => (
            <MenuTab key={t} $w={w} $active={t === 'Estoques'}>{t}</MenuTab>
          ))}
        </MenuTabs>
        <MainRibbon />
        <Mdi>
          <License>Licenciado para:<br />SILVIO PNEUS LTDA<br />CNPJ: 12.603.624/0001-17</License>
          <ProductWindow />
        </Mdi>
        <StatusBar>
          <Status $w={49}>Empresa:</Status>
          <Status $grow $bold>SILVIO PNEUS</Status>
          <Status $w={45}>Usuario:</Status>
          <Status $w={251}>ADMINISTRADOR</Status>
          <Status $w={78}>Caixa trabalho:</Status>
          <Status $w={194}>001  Data caixa.: 04/03/2016</Status>
          <Status $w={51}>Terminal:</Status>
          <Status $w={203}><TrayIcon kind="pc" />ULTRON-Bruno</Status>
        </StatusBar>
        <Taskbar>
          <Start aria-label="Iniciar"><WinLogo /></Start>
          <TaskButton aria-label="7"><TaskIcon kind="seven" /></TaskButton>
          <TaskButton aria-label="Nero"><TaskIcon kind="flame" /></TaskButton>
          <TaskButton aria-label="Chrome"><Chrome /></TaskButton>
          <TaskButton aria-label="Ello" $open $active><Hand size={18} color="#ff4a10" /></TaskButton>
          <TaskButton aria-label="IB"><TaskIcon kind="ib" /></TaskButton>
          <TaskButton aria-label="Captura"><TaskIcon kind="snip" /></TaskButton>
          <TaskButton aria-label="Explorer"><TaskIcon kind="folder" /></TaskButton>
          <TaskButton aria-label="KB"><TaskIcon kind="kb" /></TaskButton>
          <TaskButton aria-label="Mail"><TaskIcon kind="mail" /></TaskButton>
          <TaskButton aria-label="Chrome aberto" $open><Chrome /></TaskButton>
          <TaskButton aria-label="Skype" $open><TaskIcon kind="skype" /></TaskButton>
          <TaskButton aria-label="Paint" $open><TaskIcon kind="paint" /></TaskButton>
          <Tray>
            <span>PT</span>
            {['keyboard', 'up', 'avira', 'record', 'windows', 'sound', 'network'].map((k) => (
              <TrayIcon key={k} kind={k} />
            ))}
            <time>13:34</time>
            <ShowDesktop aria-label="Mostrar desktop" />
          </Tray>
        </Taskbar>
      </Shell>
      <EditDialog />
    </>
  );
}
